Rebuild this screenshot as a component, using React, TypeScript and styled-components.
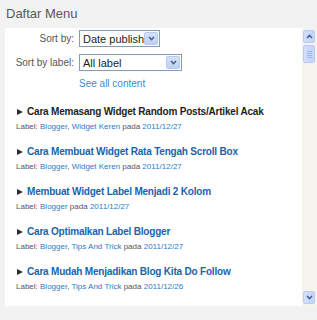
import styled, { createGlobalStyle } from 'styled-components'

const GlobalStyle = createGlobalStyle`
  body {
    margin: 0;
    background: #f2f2f2;
  }
`

const Page = styled.div`
  width: 317px;
  height: 320px;
  overflow: hidden;
  background: #f2f2f2;
  font-family: "Liberation Sans", Arial, sans-serif;
`

const Heading = styled.h2`
  margin: 0;
  height: 28px;
  padding-left: 6px;
  font-size: 13px;
  font-weight: normal;
  line-height: 27px;
  color: #585858;
`

const Frame = styled.div`
  display: flex;
  height: 278px;
  margin-left: 5px;
`

const Content = styled.div`
  flex: 1;
  background: #ffffff;
  padding: 2px 0 0 11px;
`

const SortForm = styled.div`
  display: grid;
  grid-template-columns: 58px auto;
  column-gap: 5px;
  row-gap: 7px;
  align-items: center;
  justify-items: start;
`

const SortLabel = styled.span`
  justify-self: end;
  font-size: 10px;
  color: #555555;
  white-space: nowrap;
`

const Select = styled.div<{ $width: number }>`
  display: flex;
  align-items: center;
  box-sizing: border-box;
  width: ${p => p.$width}px;
  height: 17px;
  padding: 0 1px 0 3px;
  border: 1px solid #7f9db9;
  background: #ffffff;
  font-size: 11px;
  color: #1e1e1e;
`

const SelectText = styled.span`
  flex: 1;
  min-width: 0;
  overflow: hidden;
  white-space: nowrap;
`

const ArrowButton = styled.span`
  display: flex;
  flex: none;
  align-items: center;
  justify-content: center;
  box-sizing: border-box;
  width: 14px;
  height: 13px;
  border: 1px solid #b7c9f2;
  border-radius: 2px;
  background: linear-gradient(#d6e2fd, #bccffa);
`

const SeeAll = styled.a`
  display: block;
  margin: 6px 0 0 63px;
  font-size: 10px;
  line-height: 14px;
  color: #3a8bd4;
  text-decoration: none;
`

const PostList = styled.div`
  margin-top: 14px;
`

const Post = styled.div`
  margin-bottom: 11px;
`

const PostTitle = styled.div<{ $visited?: boolean }>`
  display: flex;
  align-items: center;
  gap: 4px;
  margin-left: 1px;
  font-size: 10px;
  font-weight: bold;
  letter-spacing: -0.2px;
  line-height: 14px;
  color: ${p => (p.$visited ? '#1e1e1e' : '#1864ae')};
  white-space: nowrap;
`

const Bullet = styled.span`
  width: 0;
  height: 0;
  border-left: 6px solid #2a2a2a;
  border-top: 3.5px solid transparent;
  border-bottom: 3.5px solid transparent;
`

const PostMeta = styled.div`
  margin-top: 1px;
  font-size: 8px;
  line-height: 14px;
  color: #555555;
  white-space: nowrap;
`

const MetaLink = styled.span`
  color: #2a7cc3;
`

const Scrollbar = styled.div`
  display: flex;
  flex-direction: column;
  width: 15px;
  padding: 2px 0 2px 1px;
  box-sizing: border-box;
  background: #f5f4ef;
`

const ScrollButton = styled.span`
  display: flex;
  align-items: center;
  justify-content: center;
  box-sizing: border-box;
  width: 12px;
  height: 13px;
  border: 1px solid #b9cbf3;
  border-radius: 2px;
  background: linear-gradient(90deg, #d3dffc, #c2d4fb);
`

const Thumb = styled(ScrollButton)`
  flex-direction: column;
  gap: 1px;
  height: 18px;
  margin-top: 2px;
`

const Grip = styled.span`
  width: 5px;
  height: 1px;
  background: #9fb6e8;
`

const Track = styled.div`
  flex: 1;
`

function Chevron({ up }: { up?: boolean }) {
  return (
    <svg width="7" height="5" viewBox="0 0 7 5">
      <path
        d={up ? 'M1 4 L3.5 1.5 L6 4' : 'M1 1 L3.5 3.5 L6 1'}
        fill="none"
        stroke="#4d6185"
        strokeWidth="1.6"
      />
    </svg>
  )
}

type PostItem = {
  title: string
  labels: string[]
  date: string
  visited?: boolean
}

const posts: PostItem[] = [
  {
    title: 'Cara Memasang Widget Random Posts/Artikel Acak',
    labels: ['Blogger', 'Widget Keren'],
    date: '2011/12/27',
    visited: true,
  },
  {
    title: 'Cara Membuat Widget Rata Tengah Scroll Box',
    labels: ['Blogger', 'Widget Keren'],
    date: '2011/12/27',
  },
  {
    title: 'Membuat Widget Label Menjadi 2 Kolom',
    labels: ['Blogger'],
    date: '2011/12/27',
  },
  {
    title: 'Cara Optimalkan Label Blogger',
    labels: ['Blogger', 'Tips And Trick'],
    date: '2011/12/27',
  },
  {
    title: 'Cara Mudah Menjadikan Blog Kita Do Follow',
    labels: ['Blogger', 'Tips And Trick'],
    date: '2011/12/26',
  },
]

export default function App() {
  return (
    <Page>
      <GlobalStyle />
      <Heading>Daftar Menu</Heading>
      <Frame>
        <Content>
          <SortForm>
            <SortLabel>Sort by:</SortLabel>
            <Select $width={81}>
              <SelectText>Date publish</SelectText>
              <ArrowButton>
                <Chevron />
              </ArrowButton>
            </Select>
            <SortLabel>Sort by label:</SortLabel>
            <Select $width={103}>
              <SelectText>All label</SelectText>
              <ArrowButton>
                <Chevron />
              </ArrowButton>
            </Select>
          </SortForm>
          <SeeAll href="#">See all content</SeeAll>
          <PostList>
            {posts.map(post => (
              <Post key={post.title}>
                <PostTitle $visited={post.visited}>
                  <Bullet />
                  {post.title}
                </PostTitle>
                <PostMeta>
                  Label:{' '}
                  {post.labels.map((label, i) => (
                    <span key={label}>
                      {i > 0 && ', '}
                      <MetaLink>{label}</MetaLink>
                    </span>
                  ))}{' '}
                  pada <MetaLink>{post.date}</MetaLink>
                </PostMeta>
              </Post>
            ))}
          </PostList>
        </Content>
        <Scrollbar>
          <ScrollButton>
            <Chevron up />
          </ScrollButton>
          <Thumb>
            <Grip />
            <Grip />
            <Grip />
            <Grip />
          </Thumb>
          <Track />
          <ScrollButton>
            <Chevron />
          </ScrollButton>
        </Scrollbar>
      </Frame>
    </Page>
  )
}
